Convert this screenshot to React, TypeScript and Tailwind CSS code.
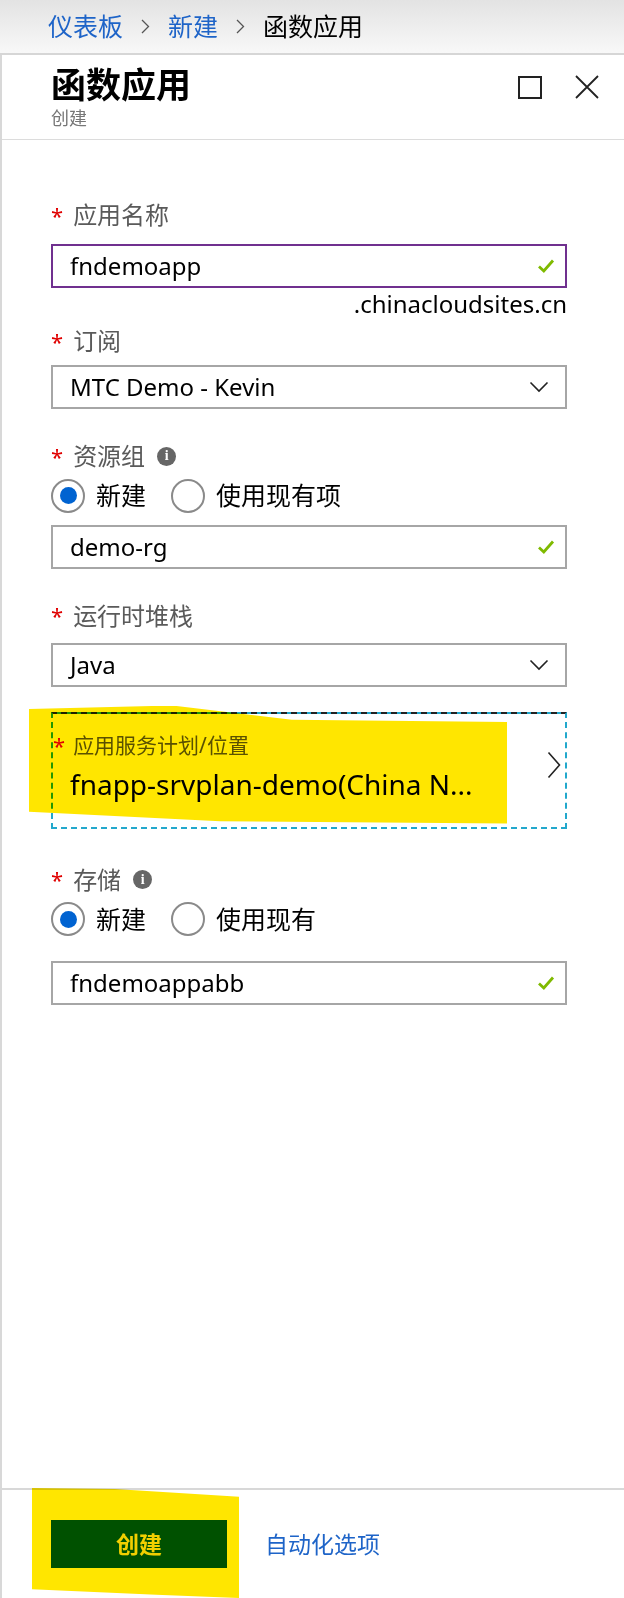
import React from "react";

const font = "font-['Noto_Sans','Noto_Sans_CJK_SC',sans-serif]";

const Check = () => (
	<svg width="18" height="16" viewBox="0 0 18 16" className="shrink-0">
		<path d="M2 8.5 L6.8 13 L16 2.5" fill="none" stroke="#7fba00" strokeWidth="2.8" />
	</svg>
);

const ChevronDown = () => (
	<svg width="20" height="12" viewBox="0 0 20 12" className="shrink-0">
		<path d="M1.5 1.5 L10 10 L18.5 1.5" fill="none" stroke="#222" strokeWidth="1.6" />
	</svg>
);

const Crumb = () => (
	<svg width="9" height="15" viewBox="0 0 9 15" className="mx-[18px] shrink-0">
		<path d="M1 1 L7.5 7.5 L1 14" fill="none" stroke="#555" strokeWidth="1.3" />
	</svg>
);

const Info = () => (
	<span className="ml-[12px] inline-flex h-[19px] w-[19px] items-center justify-center rounded-full bg-[#666] text-[14px] font-bold leading-none text-white font-['Liberation_Serif',serif]">
		i
	</span>
);

const Label = ({ text, info }: { text: string; info?: boolean }) => (
	<div className="flex h-[30px] items-center text-[24px] text-[#5a5a5a]">
		<span className="mr-[10px] text-[22px] text-[#e00000]">*</span>
		<span>{text}</span>
		{info && <Info />}
	</div>
);

const TextBox = ({ value, active }: { value: string; active?: boolean }) => (
	<div
		className={`flex h-[44px] items-center justify-between border-2 pl-[17px] pr-[10px] text-[24px] text-black ${
			active ? "border-[#70308f]" : "border-[#a6a6a6]"
		}`}
	>
		<span>{value}</span>
		<Check />
	</div>
);

const Select = ({ value }: { value: string }) => (
	<div className="flex h-[44px] items-center justify-between border-2 border-[#a6a6a6] pl-[17px] pr-[16px] text-[24px] text-black">
		<span>{value}</span>
		<ChevronDown />
	</div>
);

const Radio = ({ label, checked }: { label: string; checked?: boolean }) => (
	<div className="flex items-center">
		<span className="flex h-[34px] w-[34px] items-center justify-center rounded-full border-2 border-[#8a8a8a]">
			{checked && <span className="h-[17px] w-[17px] rounded-full bg-[#0063d1]" />}
		</span>
		<span className="ml-[11px] text-[25px] text-black">{label}</span>
	</div>
);

export default function App() {
	return (
		<div className={`flex h-[1598px] w-[624px] flex-col bg-white ${font}`}>
			<div className="flex h-[55px] shrink-0 items-center border-b-2 border-[#d6d6d6] bg-gradient-to-b from-[#e3e3e3] to-[#f8f8f8] pl-[48px] text-[25px]">
				<span className="text-[#1e64c8]">仪表板</span>
				<Crumb />
				<span className="text-[#1e64c8]">新建</span>
				<Crumb />
				<span className="text-black">函数应用</span>
			</div>

			<div className="flex flex-1 flex-col border-l-2 border-[#d8d8d8]">
				<div className="flex h-[85px] shrink-0 justify-between border-b border-[#dcdcdc] pl-[49px] pr-[24px]">
					<div className="pt-[8px]">
						<div className="text-[35px] font-bold leading-[44px] text-black">函数应用</div>
						<div className="text-[18px] leading-[22px] text-[#777]">创建</div>
					</div>
					<div className="flex items-start gap-[32px] pt-[19px]">
						<span className="mt-[2px] h-[23px] w-[24px] border-2 border-[#222]" />
						<svg width="26" height="26" viewBox="0 0 26 26">
							<path d="M2 2 L24 24 M24 2 L2 24" stroke="#222" strokeWidth="1.8" />
						</svg>
					</div>
				</div>

				<div className="flex flex-1 flex-col pl-[49px] pr-[57px] pt-[60px]">
					<Label text="应用名称" />
					<div className="mt-[14px]">
						<TextBox value="fndemoapp" active />
					</div>
					<div className="text-right text-[24px] leading-[32px] text-black">.chinacloudsites.cn</div>

					<div className="mt-[6px]">
						<Label text="订阅" />
					</div>
					<div className="mt-[9px]">
						<Select value="MTC Demo - Kevin" />
					</div>

					<div className="mt-[32px]">
						<Label text="资源组" info />
					</div>
					<div className="mt-[6px] flex gap-[25px]">
						<Radio label="新建" checked />
						<Radio label="使用现有项" />
					</div>
					<div className="mt-[10px]">
						<TextBox value="demo-rg" />
					</div>

					<div className="mt-[32px]">
						<Label text="运行时堆栈" />
					</div>
					<div className="mt-[12px]">
						<Select value="Java" />
					</div>

					<div className="relative mt-[25px] flex h-[117px] items-start justify-between border-2 border-dashed border-[#22a8cc] border-t-[#222] bg-[linear-gradient(#22a8cc,#22a8cc)] bg-[length:100%_2px] bg-origin-border bg-no-repeat pr-[4px] pt-[18px]">
						<div>
							<div className="flex h-[28px] items-center text-[21px] text-[#5a5a5a]">
								<span className="mr-[8px] text-[22px] text-[#e00000]">*</span>
								<span>应用服务计划/位置</span>
							</div>
							<div className="mt-[6px] pl-[17px] text-[28px] leading-[36px] text-black">fnapp-srvplan-demo(China N...</div>
						</div>
						<svg width="14" height="28" viewBox="0 0 14 28" className="mt-[19px] shrink-0">
							<path d="M1.5 1.5 L12.5 14 L1.5 26.5" fill="none" stroke="#222" strokeWidth="1.6" />
						</svg>
						<div className="pointer-events-none absolute left-[-24px] top-[-8px] h-[118px] w-[478px] bg-[#ffe600] mix-blend-multiply [clip-path:polygon(0%_3%,30%_0%,55%_12%,100%_14%,100%_100%,40%_98%,0%_90%)]" />
					</div>

					<div className="mt-[36px]">
						<Label text="存储" info />
					</div>
					<div className="mt-[6px] flex gap-[25px]">
						<Radio label="新建" checked />
						<Radio label="使用现有" />
					</div>
					<div className="mt-[23px]">
						<TextBox value="fndemoappabb" />
					</div>
				</div>

				<div className="relative flex h-[110px] shrink-0 items-center border-t-2 border-[#d8d8d8] pl-[49px]">
					<div className="flex h-[48px] w-[176px] items-center justify-center bg-[#005a00] text-[23px] font-bold text-[#f2e600]">
						创建
					</div>
					<span className="ml-[38px] text-[23px] text-[#1e64c8]">自动化选项</span>
					<div className="pointer-events-none absolute left-[30px] top-[-2px] h-[110px] w-[207px] bg-[#ffe600] mix-blend-multiply [clip-path:polygon(0%_0%,40%_1%,100%_8%,100%_100%,60%_97%,0%_92%)]" />
				</div>
			</div>
		</div>
	);
}
